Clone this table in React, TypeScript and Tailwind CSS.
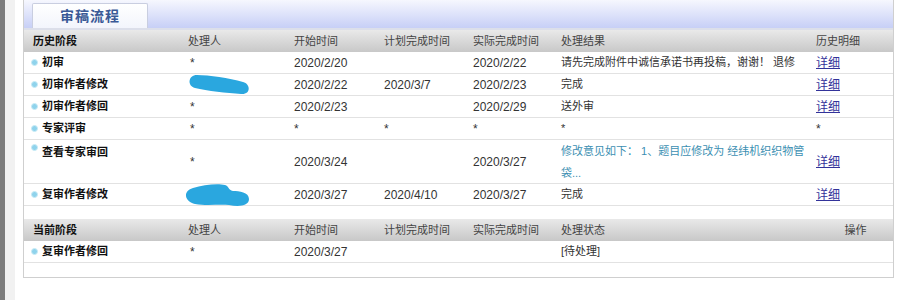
import React from "react";

const FONT = { fontFamily: '"Liberation Sans", "Noto Sans CJK SC", sans-serif' };

const grid = "grid grid-cols-[164px_106px_90px_89px_88px_255px_1fr]";

function Bullet() {
  return (
    <span className="inline-block w-[7px] h-[7px] rounded-full bg-[#8fd3ec] border border-[#c9ebf6] mr-[4px] shrink-0" />
  );
}

function Blob1() {
  return (
    <svg className="absolute left-[1px] top-[-1px] overflow-visible" width="62" height="24" viewBox="0 0 62 24">
      <path
        d="M8 2 C 20 2, 40 5, 54 9 C 62 11, 62 22, 52 21 C 38 20, 18 18, 6 15 C -2 13, -1 2, 8 2 Z"
        fill="#2aa7df"
      />
    </svg>
  );
}

function Blob2() {
  return (
    <svg className="absolute left-[-5px] top-[-1px] overflow-visible" width="68" height="26" viewBox="0 0 68 26">
      <path
        d="M10 5 C 20 2, 34 0, 42 2 C 46 3, 45 7, 50 8 C 56 8, 66 9, 66 16 C 66 23, 56 24, 46 22 C 36 21, 24 23, 12 21 C 2 19, -1 8, 10 5 Z"
        fill="#2aa7df"
      />
    </svg>
  );
}

type Row = {
  stage: string;
  person: React.ReactNode;
  start: string;
  plan: string;
  actual: string;
  result: React.ReactNode;
  detail: boolean | string;
  tall?: boolean;
};

const rows: Row[] = [
  { stage: "初审", person: "*", start: "2020/2/20", plan: "", actual: "2020/2/22", result: "请先完成附件中诚信承诺书再投稿，谢谢！ 退修", detail: true },
  { stage: "初审作者修改", person: <Blob1 />, start: "2020/2/22", plan: "2020/3/7", actual: "2020/2/23", result: "完成", detail: true },
  { stage: "初审作者修回", person: "*", start: "2020/2/23", plan: "", actual: "2020/2/29", result: "送外审", detail: true },
  { stage: "专家评审", person: "*", start: "*", plan: "*", actual: "*", result: "*", detail: "*" },
  {
    stage: "查看专家审回",
    person: "*",
    start: "2020/3/24",
    plan: "",
    actual: "2020/3/27",
    result: (
      <span className="text-[#3c8fb2] leading-[22px] block">
        修改意见如下： 1、题目应修改为 经纬机织织物管
        <br />
        袋...
      </span>
    ),
    detail: true,
    tall: true,
  },
  { stage: "复审作者修改", person: <Blob2 />, start: "2020/3/27", plan: "2020/4/10", actual: "2020/3/27", result: "完成", detail: true },
];

function Link() {
  return <span className="text-[12px] text-[#33339a] underline">详细</span>;
}

function HeaderRow({ cols }: { cols: string[] }) {
  return (
    <div className={`${grid} h-[22px] items-center bg-gradient-to-b from-[#e9e9e9] to-[#c8c8c8] text-[11px] text-[#444]`}>
      <div className="pl-[9px] font-bold text-[#111]">{cols[0]}</div>
      <div>{cols[1]}</div>
      <div>{cols[2]}</div>
      <div>{cols[3]}</div>
      <div>{cols[4]}</div>
      <div>{cols[5]}</div>
      <div className={cols[6] === "操作" ? "text-center pl-[2px]" : ""}>{cols[6]}</div>
    </div>
  );
}

function DataRow({ r }: { r: Row }) {
  const h = r.tall ? "h-[44px]" : "h-[22px]";
  const cell = "flex items-center text-[12px] text-[#333]";
  return (
    <div className={`${grid} ${h} border-b border-[#e2e2e2]`}>
      <div className={`flex ${r.tall ? "items-start pt-[4px]" : "items-center"} pl-[7px] text-[11px] font-bold text-[#111]`}>
        <Bullet />
        <span>{r.stage}</span>
      </div>
      <div className={`${cell} relative pl-[2px]`}>{r.person}</div>
      <div className={cell}>{r.start}</div>
      <div className={cell}>{r.plan}</div>
      <div className={cell}>{r.actual}</div>
      <div className={`${r.tall ? "flex items-start" : "flex items-center"} text-[11px] text-[#333]`}>{r.result}</div>
      <div className={cell}>{r.detail === true ? <Link /> : r.detail}</div>
    </div>
  );
}

export default function App() {
  return (
    <div className="flex w-[900px] h-[300px] bg-white" style={FONT}>
      <div className="w-[5px] bg-[#7c7c7c]" />
      <div className="w-[10px] bg-[#f1f1f1]" />
      <div className="w-[8px] bg-white" />
      <div className="w-[871px] h-[278px] border-x border-b border-[#cfcfcf] bg-white flex flex-col">
        <div className="h-[30px] bg-gradient-to-b from-[#f6f7fe] to-[#c7cff6] border-b-[2px] border-[#dcdfea] flex items-end pl-[8px]">
          <div className="w-[116px] h-[25px] bg-gradient-to-b from-white to-[#f3f5fc] border-t border-x border-[#c9cee0] rounded-t-[2px] flex items-center justify-center">
            <span className="text-[14px] font-bold text-[#3a5996] tracking-[1px]">审稿流程</span>
          </div>
        </div>
        <HeaderRow cols={["历史阶段", "处理人", "开始时间", "计划完成时间", "实际完成时间", "处理结果", "历史明细"]} />
        {rows.map((r, i) => (
          <DataRow key={i} r={r} />
        ))}
        <div className="h-[13px]" />
        <HeaderRow cols={["当前阶段", "处理人", "开始时间", "计划完成时间", "实际完成时间", "处理状态", "操作"]} />
        <DataRow
          r={{ stage: "复审作者修回", person: "*", start: "2020/3/27", plan: "", actual: "", result: "[待处理]", detail: "" }}
        />
      </div>
    </div>
  );
}
